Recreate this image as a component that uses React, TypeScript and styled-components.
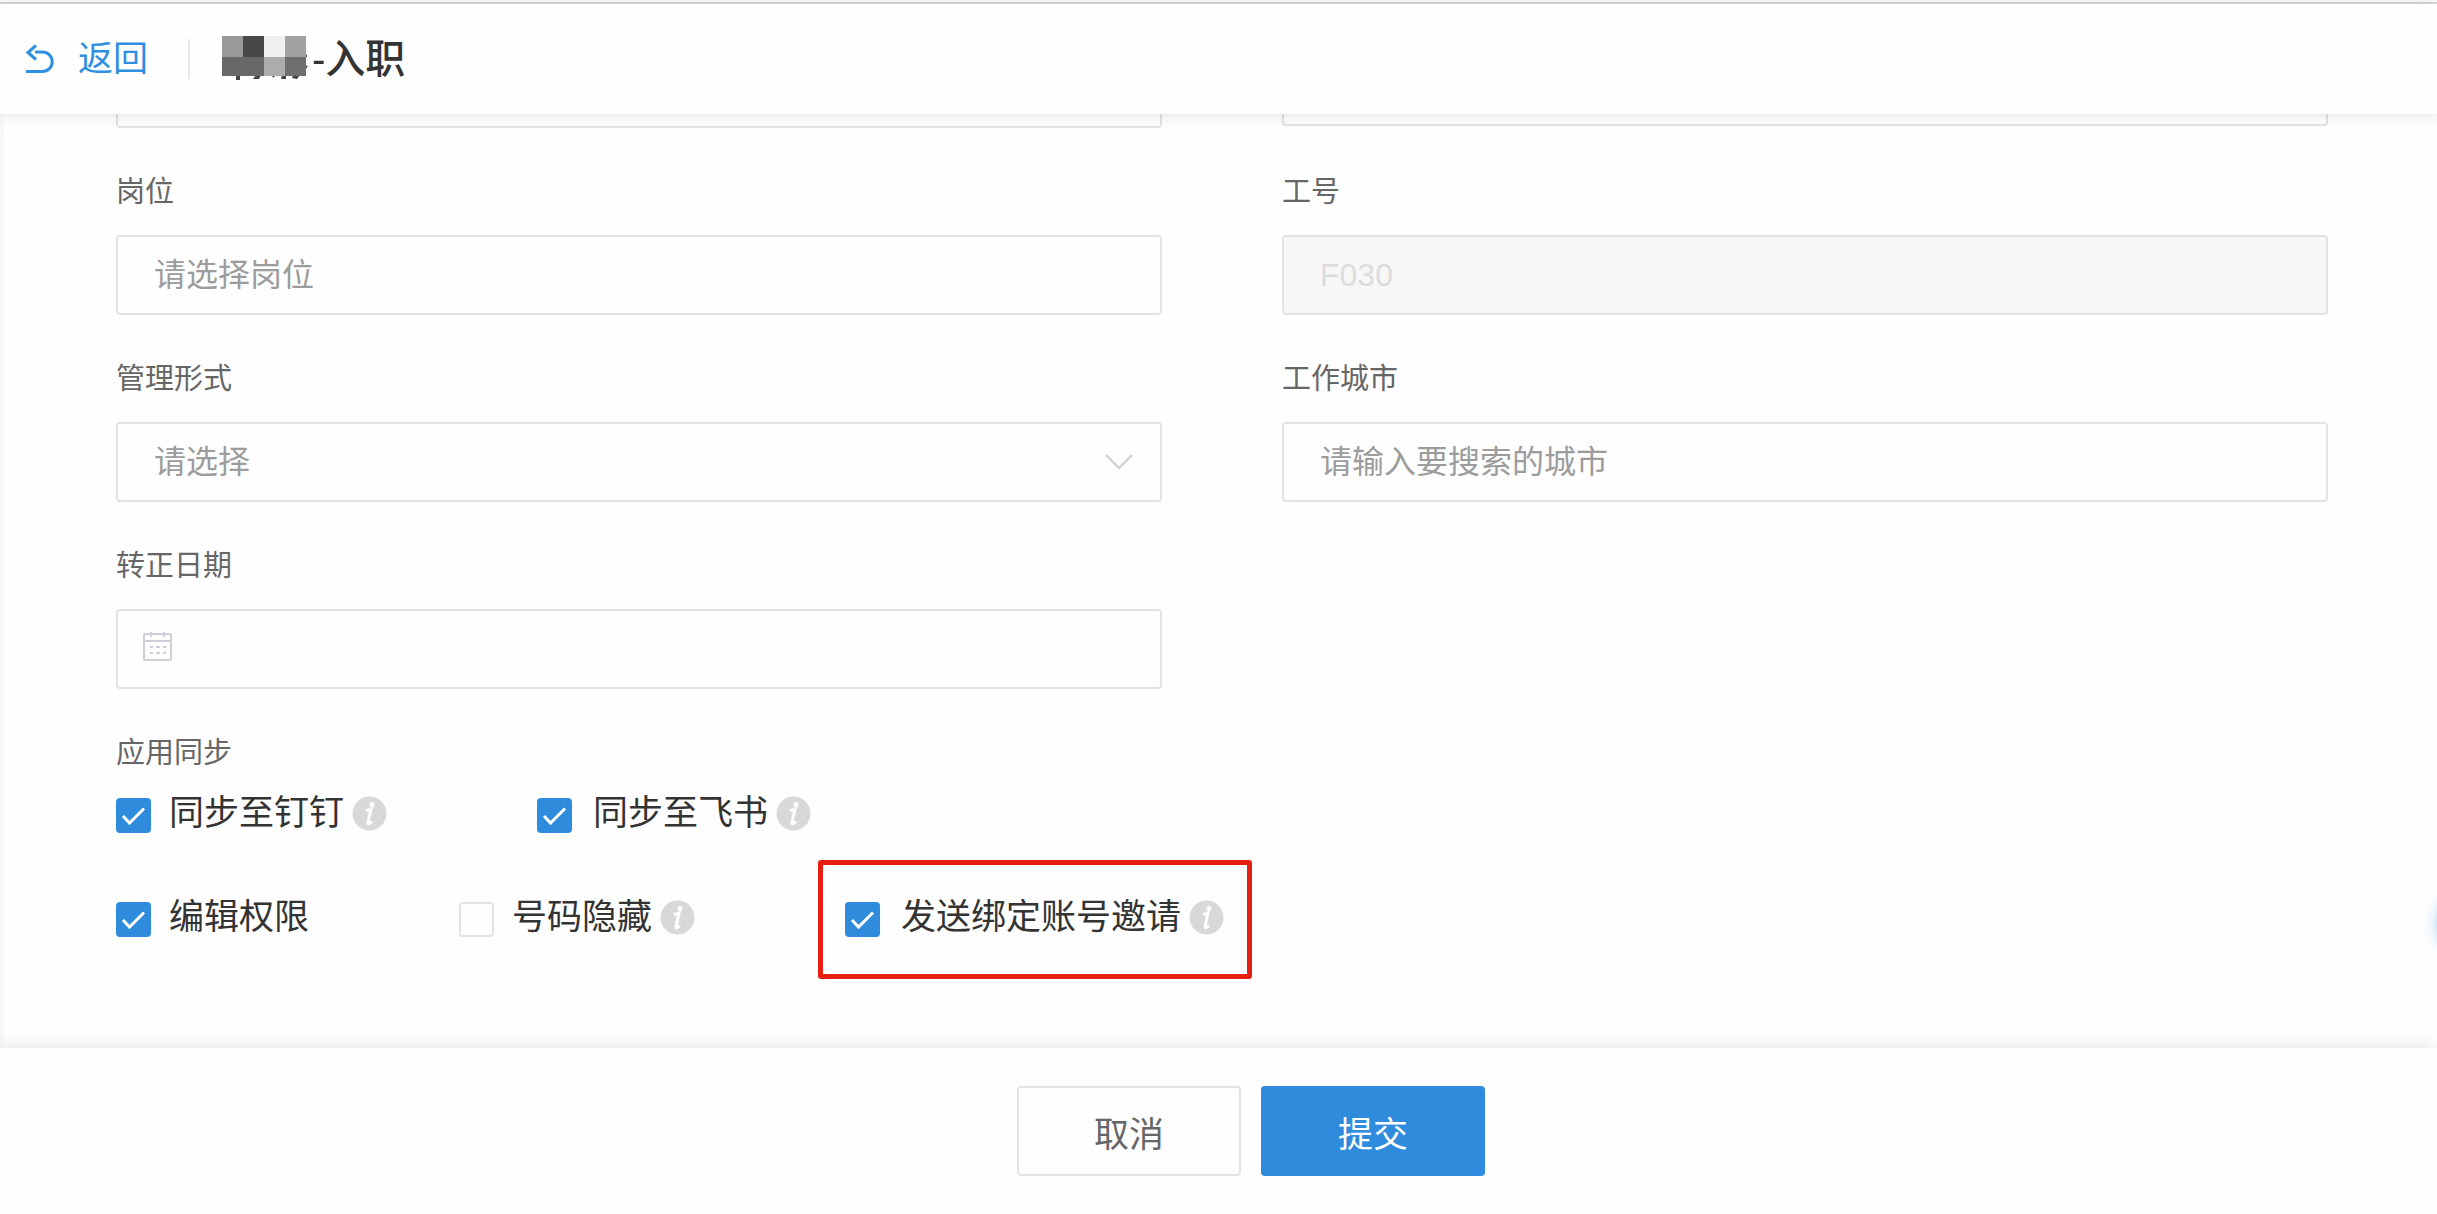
import React, { useState } from 'react';
import styled, { createGlobalStyle } from 'styled-components';

const GlobalStyle = createGlobalStyle`
  *, *::before, *::after { box-sizing: border-box; }
  body {
    margin: 0;
    background: #fefefe;
    font-family: 'Liberation Sans', 'Noto Sans CJK SC', sans-serif;
  }
  button, input, select { font-family: inherit; }
`;

const Page = styled.div`
  display: flex;
  flex-direction: column;
  min-height: 100vh;
`;

const TopRule = styled.div`
  height: 2px;
  margin-top: 2px;
  background: #d6d9db;
`;

const Header = styled.header`
  position: relative;
  z-index: 1;
  display: flex;
  align-items: center;
  height: 110px;
  padding: 0 26px;
  background: #fefefe;
  box-shadow: 0 0 16px rgba(0, 0, 0, 0.13);
`;

const BackLink = styled.a`
  display: flex;
  align-items: center;
  gap: 24px;
  color: #2f8fe0;
  font-size: 35px;
  line-height: 46px;
  text-decoration: none;
`;

const Divider = styled.span`
  width: 2px;
  height: 40px;
  margin: 0 32px 0 40px;
  background: #e8e8e8;
`;

const Title = styled.h1`
  display: flex;
  align-items: center;
  gap: 4px;
  margin: 0;
  color: #333;
  font-size: 40px;
  font-weight: 500;
  line-height: 46px;
`;

const Main = styled.main`
  position: relative;
  flex: 1;
  overflow: hidden;
  padding: 0 109px 70px 112px;
  border-left: 4px solid #f7f7f7;
`;

const FormGrid = styled.div`
  display: grid;
  grid-template-columns: 1fr 1fr;
  column-gap: 120px;
  row-gap: 43px;
`;

const ScrolledInput = styled.input<{ $height: number }>`
  width: 100%;
  height: ${(p) => p.$height}px;
  border: 2px solid #e1e4e5;
  border-top: 0;
  border-radius: 0 0 4px 4px;
  background: transparent;
  outline: none;
`;

const Field = styled.div`
  display: flex;
  flex-direction: column;
  gap: 22px;
`;

const Label = styled.label`
  color: #666;
  font-size: 29px;
  line-height: 42px;
`;

const ControlBox = styled.div`
  position: relative;
  display: flex;
`;

const TextInput = styled.input`
  width: 100%;
  height: 80px;
  padding: 0 36px;
  border: 2px solid #e1e4e5;
  border-radius: 4px;
  background: transparent;
  color: #666;
  font-size: 32px;
  outline: none;
  &::placeholder { color: #9c9c9c; opacity: 1; }
  &:disabled { background: #f7f7f7; color: #dcdcdc; }
`;

const Select = styled.select`
  appearance: none;
  width: 100%;
  height: 80px;
  padding: 0 36px;
  border: 2px solid #e1e4e5;
  border-radius: 4px;
  background: transparent;
  color: #9c9c9c;
  font-size: 32px;
  outline: none;
`;

const ControlIcon = styled.svg<{ $side: 'left' | 'right' }>`
  position: absolute;
  top: 22px;
  ${(p) => p.$side}: 26px;
  pointer-events: none;
`;

const SyncGroup = styled.fieldset`
  min-width: 0;
  margin: 43px 0 0;
  padding: 0;
  border: 0;
`;

const Legend = styled.legend`
  padding: 0;
  color: #666;
  font-size: 29px;
  line-height: 42px;
`;

const OptionRows = styled.div`
  display: flex;
  flex-direction: column;
  gap: 58px;
  padding-top: 16px;
`;

const OptionRow = styled.div`
  display: flex;
  gap: 150px;
`;

const Option = styled.div`
  position: relative;
  display: flex;
  align-items: center;
  gap: 8px;
`;

const OptionLabel = styled.label<{ $gap: number }>`
  display: flex;
  align-items: center;
  gap: ${(p) => p.$gap}px;
  color: #333;
  font-size: 35px;
  line-height: 46px;
`;

const CheckWrap = styled.span`
  position: relative;
  display: flex;
  margin-top: 4px;
`;

const CheckInput = styled.input`
  appearance: none;
  width: 35px;
  height: 35px;
  margin: 0;
  border: 2px solid #e1e4e5;
  border-radius: 4px;
  background: transparent;
  &:checked { border-color: #2f8cdd; background: #2f8cdd; }
`;

const CheckMark = styled.svg`
  position: absolute;
  inset: 0;
  pointer-events: none;
`;

const Highlight = styled.span`
  position: absolute;
  inset: -34px -28px -39px -27px;
  border: 5px solid #e71f12;
  border-radius: 3px;
  pointer-events: none;
`;

const FloatingGlow = styled.span`
  position: absolute;
  right: -58px;
  bottom: 95px;
  width: 60px;
  height: 60px;
  border-radius: 50%;
  background: #d3eafb;
  box-shadow: 0 0 14px rgba(64, 164, 240, 0.35);
`;

const Footer = styled.footer`
  position: relative;
  z-index: 1;
  display: flex;
  justify-content: center;
  gap: 20px;
  padding: 38px 0 38px 65px;
  background: #fefefe;
  box-shadow: 0 0 16px rgba(0, 0, 0, 0.13);
`;

const Button = styled.button<{ $primary?: boolean }>`
  width: 224px;
  height: 90px;
  padding: 0;
  border: 2px solid ${(p) => (p.$primary ? '#2f8cdd' : '#e1e4e5')};
  border-radius: 4px;
  background: ${(p) => (p.$primary ? '#2f8cdd' : '#fefefe')};
  color: ${(p) => (p.$primary ? '#fff' : '#666')};
  font-size: 35px;
`;

const BackIcon = () => (
  <svg width="28" height="30" viewBox="0 0 28 30" fill="none" stroke="#2f8fe0" strokeWidth="3" aria-hidden="true">
    <path d="M10 1.5 2 8.500l8 7" />
    <path d="M9 8h7.500a9.700 9.700 0 0 1 0 19.500H0" />
  </svg>
);

const MOSAIC = [
  ['#999999', '#484848', '#efefef', '#a1a1a1'],
  ['#686868', '#686868', '#acacac', '#6f6f6f'],
];

const RedactedName = () => (
  <svg width="86" height="46" viewBox="0 0 86 46" aria-hidden="true">
    <path d="M14 39v5h4v-5zM34 39l-3 4h6l2-4zM50 39l1 3 3-3zM60 39l-1 4h5v-4zM71 39l-1 3 5 1 3-4zM82 17l3 2v2h-3zM82 29l4 1-3 4z" fill="#444" />
    {MOSAIC.map((row, r) =>
      row.map((fill, c) => (
        <rect key={`${r}-${c}`} x={c * 21} y={r === 0 ? 0 : 21} width={21} height={r === 0 ? 21 : 19} fill={fill} />
      )),
    )}
  </svg>
);

const InfoIcon = () => (
  <svg width="35" height="35" viewBox="0 0 35 35" aria-hidden="true">
    <circle cx="17.500" cy="17.500" r="17" fill="#d8d8d8" />
    <circle cx="20" cy="8.500" r="2.500" fill="#fff" />
    <path d="M14 14.500q3-.5 5-1.500l-3 13.500q-.3 1.500 1 1t3-2" fill="none" stroke="#fff" strokeWidth="3" />
  </svg>
);

interface CheckOptionProps {
  id: string;
  text: string;
  checked?: boolean;
  info?: boolean;
  gap?: number;
  highlighted?: boolean;
}

function CheckOption({ id, text, checked = false, info = false, gap = 18, highlighted = false }: CheckOptionProps) {
  const [on, setOn] = useState(checked);
  return (
    <Option>
      <OptionLabel htmlFor={id} $gap={gap}>
        <CheckWrap>
          <CheckInput id={id} type="checkbox" checked={on} onChange={(e) => setOn(e.target.checked)} />
          {on && (
            <CheckMark width="35" height="35" viewBox="0 0 35 35" fill="none" stroke="#fff" strokeWidth="3">
              <path d="m7 18 6.500 7L28 10.500" />
            </CheckMark>
          )}
        </CheckWrap>
        {text}
      </OptionLabel>
      {info && <InfoIcon />}
      {highlighted && <Highlight />}
    </Option>
  );
}

export default function App() {
  return (
    <Page>
      <GlobalStyle />
      <TopRule />
      <Header>
        <BackLink href="#back">
          <BackIcon />
          返回
        </BackLink>
        <Divider />
        <Title>
          <RedactedName />
          -入职
        </Title>
      </Header>

      <Main>
        <FormGrid>
          <ScrolledInput $height={14} readOnly />
          <ScrolledInput $height={12} readOnly />

          <Field>
            <Label htmlFor="post">岗位</Label>
            <TextInput id="post" placeholder="请选择岗位" />
          </Field>
          <Field>
            <Label htmlFor="number">工号</Label>
            <TextInput id="number" defaultValue="F030" disabled />
          </Field>

          <Field>
            <Label htmlFor="manage">管理形式</Label>
            <ControlBox>
              <Select id="manage" defaultValue="">
                <option value="">请选择</option>
              </Select>
              <ControlIcon $side="right" width="34" height="34" viewBox="0 0 34 34" fill="none" stroke="#cdd0d8" strokeWidth="2">
                <path d="m4 11 13 13 13-13" />
              </ControlIcon>
            </ControlBox>
          </Field>
          <Field>
            <Label htmlFor="city">工作城市</Label>
            <TextInput id="city" placeholder="请输入要搜索的城市" />
          </Field>

          <Field>
            <Label htmlFor="date">转正日期</Label>
            <ControlBox>
              <TextInput id="date" />
              <ControlIcon $side="left" width="31" height="31" viewBox="0 0 31 31" fill="none" stroke="#cdd0d8" strokeWidth="2">
                <rect x="2" y="3" width="27" height="26" rx="1" />
                <path d="M2 10h27M9 1v5M22 1v5" />
                <path d="M8 16h3M14 16h4M21 16h3M8 22h3M14 22h4M21 22h3" />
              </ControlIcon>
            </ControlBox>
          </Field>
        </FormGrid>

        <SyncGroup>
          <Legend>应用同步</Legend>
          <OptionRows>
            <OptionRow>
              <CheckOption id="dingtalk" text="同步至钉钉" checked info />
              <CheckOption id="feishu" text="同步至飞书" checked info gap={21} />
            </OptionRow>
            <OptionRow>
              <CheckOption id="edit" text="编辑权限" checked />
              <CheckOption id="hide" text="号码隐藏" info />
              <CheckOption id="invite" text="发送绑定账号邀请" checked info gap={21} highlighted />
            </OptionRow>
          </OptionRows>
        </SyncGroup>
        <FloatingGlow />
      </Main>

      <Footer>
        <Button type="button">取消</Button>
        <Button type="submit" $primary>提交</Button>
      </Footer>
    </Page>
  );
}
